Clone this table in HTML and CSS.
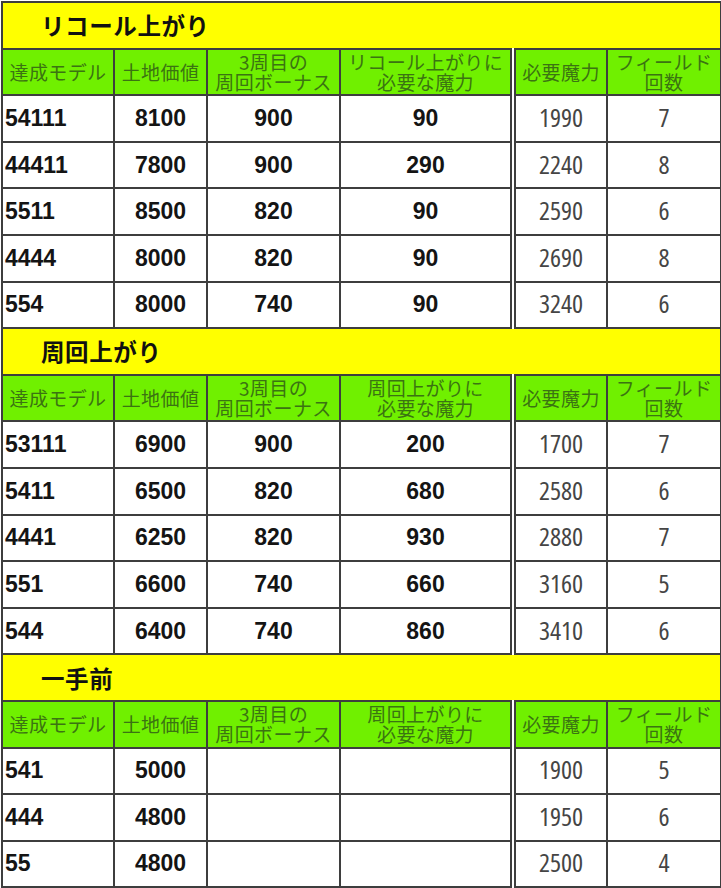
FILE: index.html
```html
<!DOCTYPE html>
<html lang="ja">
<head>
<meta charset="utf-8">
<title>リコール上がり</title>
<link rel="stylesheet" href="styles.css">
</head>
<body>
<table class="sheet">
<colgroup>
<col class="w1"><col class="w2"><col class="w3"><col class="w4"><col class="w5"><col class="w6">
</colgroup>
<tbody>
<tr class="title"><td colspan="6">リコール上がり</td></tr>
<tr class="head"><th>達成モデル</th><th>土地価値</th><th>3周目の<br>周回ボーナス</th><th>リコール上がりに<br>必要な魔力</th><th class="dbl">必要魔力</th><th>フィールド<br>回数</th></tr>
<tr class="row"><td class="model">54111</td><td class="b">8100</td><td class="b">900</td><td class="b">90</td><td class="g dbl">1990</td><td class="g">7</td></tr>
<tr class="row"><td class="model">44411</td><td class="b">7800</td><td class="b">900</td><td class="b">290</td><td class="g dbl">2240</td><td class="g">8</td></tr>
<tr class="row"><td class="model">5511</td><td class="b">8500</td><td class="b">820</td><td class="b">90</td><td class="g dbl">2590</td><td class="g">6</td></tr>
<tr class="row"><td class="model">4444</td><td class="b">8000</td><td class="b">820</td><td class="b">90</td><td class="g dbl">2690</td><td class="g">8</td></tr>
<tr class="row"><td class="model">554</td><td class="b">8000</td><td class="b">740</td><td class="b">90</td><td class="g dbl">3240</td><td class="g">6</td></tr>

<tr class="title"><td colspan="6">周回上がり</td></tr>
<tr class="head"><th>達成モデル</th><th>土地価値</th><th>3周目の<br>周回ボーナス</th><th>周回上がりに<br>必要な魔力</th><th class="dbl">必要魔力</th><th>フィールド<br>回数</th></tr>
<tr class="row"><td class="model">53111</td><td class="b">6900</td><td class="b">900</td><td class="b">200</td><td class="g dbl">1700</td><td class="g">7</td></tr>
<tr class="row"><td class="model">5411</td><td class="b">6500</td><td class="b">820</td><td class="b">680</td><td class="g dbl">2580</td><td class="g">6</td></tr>
<tr class="row"><td class="model">4441</td><td class="b">6250</td><td class="b">820</td><td class="b">930</td><td class="g dbl">2880</td><td class="g">7</td></tr>
<tr class="row"><td class="model">551</td><td class="b">6600</td><td class="b">740</td><td class="b">660</td><td class="g dbl">3160</td><td class="g">5</td></tr>
<tr class="row"><td class="model">544</td><td class="b">6400</td><td class="b">740</td><td class="b">860</td><td class="g dbl">3410</td><td class="g">6</td></tr>

<tr class="title"><td colspan="6">一手前</td></tr>
<tr class="head"><th>達成モデル</th><th>土地価値</th><th>3周目の<br>周回ボーナス</th><th>周回上がりに<br>必要な魔力</th><th class="dbl">必要魔力</th><th>フィールド<br>回数</th></tr>
<tr class="row"><td class="model">541</td><td class="b">5000</td><td class="b"></td><td class="b"></td><td class="g dbl">1900</td><td class="g">5</td></tr>
<tr class="row"><td class="model">444</td><td class="b">4800</td><td class="b"></td><td class="b"></td><td class="g dbl">1950</td><td class="g">6</td></tr>
<tr class="row"><td class="model">55</td><td class="b">4800</td><td class="b"></td><td class="b"></td><td class="g dbl">2500</td><td class="g">4</td></tr>
</tbody>
</table>
</body>
</html>
```

FILE: styles.css
```css
html, body {
  margin: 0;
  padding: 0;
  background: #ffffff;
}

.sheet {
  border-collapse: collapse;
  table-layout: fixed;
  width: 719px;
  margin: 1px 0 0 1px;
  font-family: "Noto Sans CJK JP", sans-serif;
}

.w1 { width: 112px; }
.w2 { width: 93px; }
.w3 { width: 133px; }
.w4 { width: 173px; }
.w5 { width: 94px; }
.w6 { width: 114px; }

.sheet td,
.sheet th {
  border: 2px solid #3e3e3e;
  padding: 0;
  height: 46.6px;
  box-sizing: border-box;
  overflow: hidden;
  white-space: nowrap;
}

.title td {
  background: #ffff00;
  font-family: "Noto Sans CJK JP", sans-serif;
  font-weight: 700;
  font-size: 23.5px;
  letter-spacing: 0.6px;
  color: #111111;
  padding-left: 38px;
  text-align: left;
}

.head th {
  background: #70f000;
  color: #3b7412;
  font-weight: 400;
  font-size: 19px;
  line-height: 20px;
  letter-spacing: 0.4px;
  text-align: center;
}

.sheet .dbl {
  border-left: 6px double #3e3e3e;
}

.row td {
  background: #ffffff;
  text-align: center;
}

.row .model {
  text-align: left;
  padding-left: 2px;
  font-family: "Liberation Sans", Arial, sans-serif;
  font-weight: 700;
  font-size: 23px;
  color: #141414;
}

.row .b {
  font-family: "Liberation Sans", Arial, sans-serif;
  font-weight: 700;
  font-size: 23px;
  color: #141414;
}

.row .g {
  font-family: "Open Sans", "Liberation Sans Narrow", sans-serif;
  font-stretch: 75%;
  font-weight: 400;
  font-size: 26px;
  line-height: 26px;
  padding-bottom: 3px;
  color: #454545;
}
```
